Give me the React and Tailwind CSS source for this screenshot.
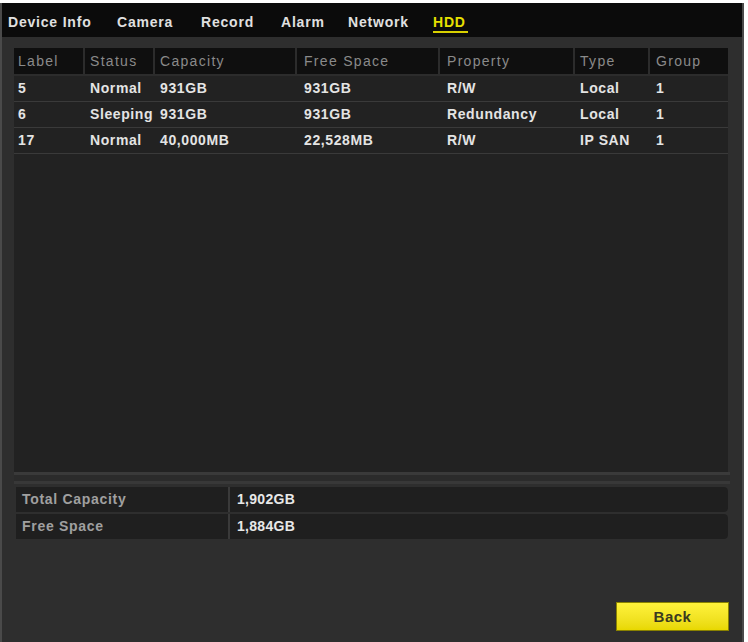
import React from "react";

const cols = [
  { key: "label", title: "Label", w: "w-[71px]", pl: "pl-[4px]" },
  { key: "status", title: "Status", w: "w-[70px]", pl: "pl-[5px]" },
  { key: "capacity", title: "Capacity", w: "w-[142px]", pl: "pl-[5px]" },
  { key: "free", title: "Free Space", w: "w-[143px]", pl: "pl-[7px]" },
  { key: "property", title: "Property", w: "w-[135px]", pl: "pl-[7px]" },
  { key: "type", title: "Type", w: "w-[75px]", pl: "pl-[5px]" },
  { key: "group", title: "Group", w: "w-[78px]", pl: "pl-[6px]" },
];

const rows = [
  { label: "5", status: "Normal", capacity: "931GB", free: "931GB", property: "R/W", type: "Local", group: "1" },
  { label: "6", status: "Sleeping", capacity: "931GB", free: "931GB", property: "Redundancy", type: "Local", group: "1" },
  { label: "17", status: "Normal", capacity: "40,000MB", free: "22,528MB", property: "R/W", type: "IP SAN", group: "1" },
];

const tabs = [
  { name: "Device Info", w: "w-[109px]" },
  { name: "Camera", w: "w-[84px]" },
  { name: "Record", w: "w-[80px]" },
  { name: "Alarm", w: "w-[67px]" },
  { name: "Network", w: "w-[85px]" },
];

export default function App() {
  return (
    <div
      className="w-[748px] h-[642px] bg-white pt-[3px] overflow-hidden"
      style={{ fontFamily: '"Liberation Sans", Arial, sans-serif' }}
    >
      <div className="w-[744px] h-[639px] bg-[#2e2e2e] border-l-2 border-r-2 border-[#4a4a4a] flex flex-col">
        {/* Tab bar */}
        <div className="h-[34px] bg-[#0b0b0b] flex items-center pl-[6px] pt-[4px] text-[14px] font-bold text-[#e0e0e0] tracking-[0.8px] shrink-0">
          {tabs.map((t) => (
            <div key={t.name} className={`${t.w} shrink-0`}>
              {t.name}
            </div>
          ))}
          <div className="text-[#e6e000] relative">
            HDD
            <div className="absolute left-0 right-[-2px] top-[19px] h-[2px] bg-[#d8d000]" />
          </div>
        </div>

        {/* Table */}
        <div className="ml-[12px] mt-[11px] w-[714px] h-[424px] bg-[#222222] flex flex-col shrink-0">
          <div className="flex h-[28px] bg-[#2c2c2c] pb-[2px] pr-[2px]">
            {cols.map((c, i) => (
              <div
                key={c.key}
                className={`${c.w} shrink-0 ${i < cols.length - 1 ? "border-r-2 border-[#2c2c2c]" : ""} bg-[#0f0f0f] ${c.pl} flex items-center text-[14px] text-[#8a8a8a] tracking-[1.3px]`}
              >
                {c.title}
              </div>
            ))}
          </div>
          {rows.map((r) => (
            <div key={r.label} className="flex h-[26px] border-b border-[#3a3a3a] items-center">
              {cols.map((c) => (
                <div
                  key={c.key}
                  className={`${c.w} ${c.pl} shrink-0 text-[14px] font-bold text-[#e4e4e4] tracking-[0.6px]`}
                >
                  {r[c.key]}
                </div>
              ))}
            </div>
          ))}
        </div>

        {/* separator bands */}
        <div className="ml-[12px] w-[716px] h-[3px] bg-[#3a3a3a] shrink-0" />
        <div className="ml-[12px] w-[716px] h-[6px] bg-[#2b2b2b] shrink-0" />
        <div className="ml-[12px] w-[716px] h-[3px] bg-[#383838] shrink-0" />

        {/* Summary */}
        <div className="ml-[14px] mt-[3px] w-[712px] flex flex-col gap-[2px] shrink-0">
          {[
            ["Total Capacity", "1,902GB"],
            ["Free Space", "1,884GB"],
          ].map(([k, v]) => (
            <div key={k} className="flex h-[25px] bg-[#3a3a3a] gap-[2px] rounded-r-[4px]">
              <div className="w-[212px] bg-[#1f1f1f] flex items-center pl-[6px] text-[14px] font-bold text-[#a0a0a0] tracking-[0.7px]">
                {k}
              </div>
              <div className="flex-1 bg-[#1f1f1f] rounded-r-[4px] flex items-center pl-[7px] text-[14px] font-bold text-[#e8e8e8] tracking-[0.3px]">
                {v}
              </div>
            </div>
          ))}
        </div>

        {/* Button */}
        <div className="flex justify-end pr-[13px] mt-[63px]">
          <button className="w-[113px] h-[29px] bg-gradient-to-b from-[#fff23a] to-[#e8d800] border border-[#8a8200] text-[15px] font-bold text-[#3a3a20] tracking-[0.5px] flex items-center justify-center pt-[1px]">
            Back
          </button>
        </div>
      </div>
    </div>
  );
}
